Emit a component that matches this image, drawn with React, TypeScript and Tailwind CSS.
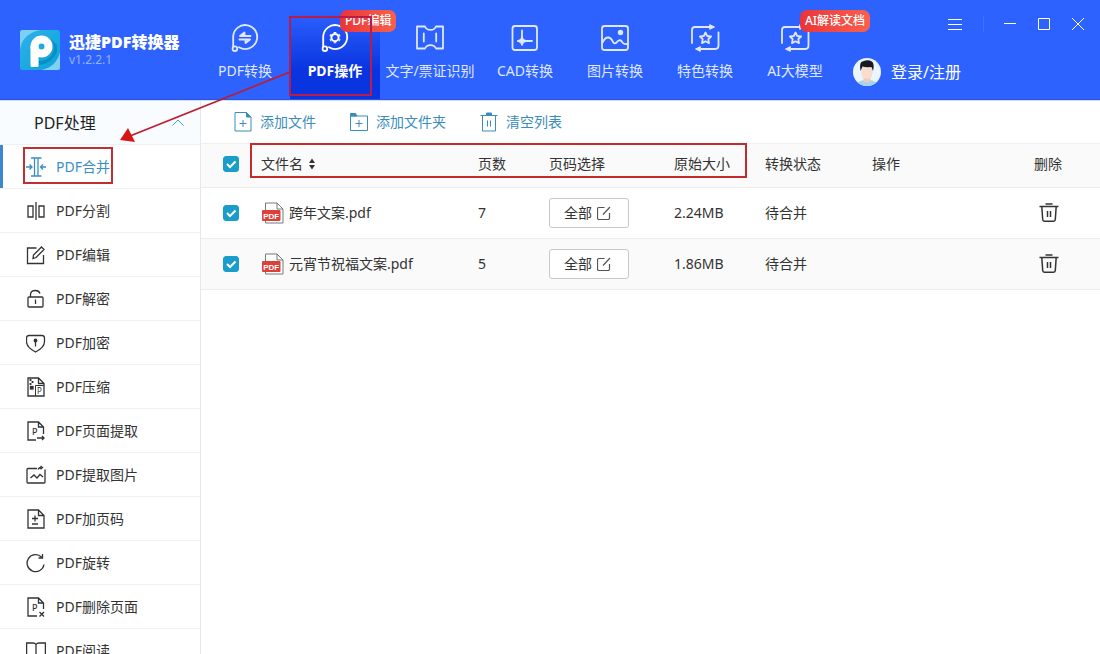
import { useState } from 'react';
import type { ReactNode } from 'react';

interface NavItem {
  label: string;
  icon: ReactNode;
  wide?: boolean;
  active?: boolean;
  badge?: string;
}

interface SideItem {
  label: string;
  icon: ReactNode;
}

interface FileRow {
  name: string;
  pages: number;
  size: string;
  status: string;
}

/* ---------- header icons ---------- */

function NavSvg({ children }: { children: ReactNode }) {
  return (
    <svg
      className="size-8"
      viewBox="0 0 32 32"
      fill="none"
      stroke="currentColor"
      strokeWidth="1.8"
      strokeLinecap="round"
      strokeLinejoin="round"
      aria-hidden="true"
    >
      {children}
    </svg>
  );
}

function Bubble() {
  return (
    <>
      <path d="M4.200 24.500V14.600A12 12 0 1 1 10 25.300" />
      <circle cx="5.900" cy="26.700" r="2.300" />
    </>
  );
}

const ConvertIcon = () => (
  <NavSvg>
    <Bubble />
    <path d="M21.500 14H11L15.500 10.500V13.500M10.500 17.500h10.500L16.500 21V18" strokeWidth="1.8" />
  </NavSvg>
);

const OperateIcon = () => (
  <NavSvg>
    <Bubble />
    <circle cx="16" cy="15.600" r="3.600" strokeWidth="2" />
    <path
      d="M16 11v-1M16 20.200v1M20 13.300l.9-.5M12 17.900l-.9.5M20 17.900l.9.5M12 13.300l-.9-.5"
      strokeWidth="2.600"
      strokeLinecap="butt"
    />
  </NavSvg>
);

const TicketIcon = () => (
  <NavSvg>
    <path d="M3 4.5h8q1.500 3.400 5.500 3.400T22 4.500h7v22h-7q-1.500-3.400-5.500-3.400T11 26.500H3z" />
    <path d="M9.800 11.500v8M22.200 11.500v8" />
  </NavSvg>
);

const CadIcon = () => (
  <NavSvg>
    <rect x="3.500" y="4" width="24.500" height="24" rx="2.500" />
    <path d="M13 8.500V19h10" />
    <path d="M13 14.500l1.500 3 3.500 1.500-3.500 1.500-1.500 3-1.500-3L8 19l3.500-1.500z" fill="currentColor" strokeWidth="1" />
  </NavSvg>
);

const PictureIcon = () => (
  <NavSvg>
    <rect x="3" y="4" width="26" height="24" rx="2.500" />
    <circle cx="21.500" cy="10.500" r="1.800" fill="currentColor" />
    <path d="M3.500 20.500q2.500-5 5.500-5t5 4.500q1.500 2.500 3.500.5 3-3.500 5-1.500 1.500 3.500 5.500 3" />
  </NavSvg>
);

const StarIcon = () => (
  <NavSvg>
    <path d="M3 21V8q0-3 3-3h16M29.500 10.500v13q0 3.500-3 3.500H10" />
    <path d="M21 2.800l4.500 2.200-4.500 2.200zM11 24.800L6.500 27l4.500 2.200z" fill="currentColor" strokeWidth="1" />
    <path d="M16.500 10.500l1.700 3.500 3.900.5-2.800 2.700.7 3.900-3.500-1.800-3.500 1.800.7-3.900-2.800-2.700 3.900-.5z" />
  </NavSvg>
);

/* ---------- sidebar icons ---------- */

function SideSvg({ children }: { children: ReactNode }) {
  return (
    <svg
      className="size-5 shrink-0"
      viewBox="0 0 20 20"
      fill="none"
      stroke="currentColor"
      strokeWidth="1.3"
      aria-hidden="true"
    >
      {children}
    </svg>
  );
}

// page outline with a folded corner, shared by several entries
const PageFold = ({ d = 'M12.500 1H2v18h16V6.500zM12.500 1v5.500H18' }: { d?: string }) => <path d={d} />;

const LetterP = ({ x }: { x: number }) => (
  <text x={x} y="14" fontSize="9" fontFamily="Noto Sans, sans-serif" fontWeight="500" fill="currentColor" stroke="none">
    P
  </text>
);

const sideItems: SideItem[] = [
  {
    label: 'PDF合并',
    icon: (
      <SideSvg>
        <path d="M5 1h3.500v18H5M15.500 1H12v18h3.500M8.500 1H12M8.500 19H12M0 10h6M3.500 7.500L6 10l-2.500 2.500M20 10h-5.500M17 7.500L14.500 10l2.500 2.500" />
      </SideSvg>
    ),
  },
  {
    label: 'PDF分割',
    icon: (
      <SideSvg>
        <path d="M2 5h5v11H2zM13 5h5v11h-5zM10 1v18" />
      </SideSvg>
    ),
  },
  {
    label: 'PDF编辑',
    icon: (
      <SideSvg>
        <path d="M10.500 3H1.500v15.500h16V10M7 13.500l.5-3.500 8-8 2.500 2.500-8 8z" />
      </SideSvg>
    ),
  },
  {
    label: 'PDF解密',
    icon: (
      <SideSvg>
        <path d="M4.500 8V5.500q0-4 5-4 3.500 0 4.500 3M9.500 10.500v4.500" />
        <rect x="2" y="8" width="15" height="10" rx="1" />
      </SideSvg>
    ),
  },
  {
    label: 'PDF加密',
    icon: (
      <SideSvg>
        <path d="M3 2.500h13q2.500 0 2.500 3v3q0 6-9 10.500-9-4.500-9-10.500v-3q0-3 2.500-3z" />
        <path d="M9.500 8.500v5" />
        <circle cx="9.500" cy="7.500" r="1.300" fill="currentColor" />
      </SideSvg>
    ),
  },
  {
    label: 'PDF压缩',
    icon: (
      <SideSvg>
        <PageFold />
        <path d="M4.500 2v2M6.500 4v2M4.500 6v2" strokeWidth="1.800" />
        <rect x="4.500" y="9.500" width="2.500" height="2.500" fill="currentColor" />
        <path d="M9.500 19V8.500h8.500" strokeWidth="1" />
        <text x="11" y="17" fontSize="8" fontFamily="Noto Sans, sans-serif" fill="currentColor" stroke="none">
          P
        </text>
      </SideSvg>
    ),
  },
  {
    label: 'PDF页面提取',
    icon: (
      <SideSvg>
        <PageFold d="M10 19H2V1h10.500L17.500 6v7M12.500 1v5h5M11 17h7M16 15l2 2-2 2" />
        <LetterP x={6} />
      </SideSvg>
    ),
  },
  {
    label: 'PDF提取图片',
    icon: (
      <SideSvg>
        <path d="M11 3.500H2q-1 0-1 1v12.500q0 1 1 1h16q1 0 1-1V4.500M4.500 13l3.500-3 3 3 3-3.500 3 2.500M12 4.500q1-2 3-2M14.500 1l2 1.500-2 1.700" />
      </SideSvg>
    ),
  },
  {
    label: 'PDF加页码',
    icon: (
      <SideSvg>
        <PageFold />
        <path d="M6 9.500h6M9 6.500v6M6 15h6" />
      </SideSvg>
    ),
  },
  {
    label: 'PDF旋转',
    icon: (
      <SideSvg>
        <path d="M18 11.500A8.500 8.500 0 1 1 15.500 4M16.500 1v4h-4" />
      </SideSvg>
    ),
  },
  {
    label: 'PDF删除页面',
    icon: (
      <SideSvg>
        <PageFold d="M11 19H2V1h10.500L17.500 6v6M12.500 1v5h5M13.500 15l4.500 4.500M18 15l-4.500 4.500" />
        <LetterP x={6} />
      </SideSvg>
    ),
  },
  {
    label: 'PDF阅读',
    icon: (
      <SideSvg>
        <path d="M10 3.500Q9 2 7 2H.6v15H7.500q1.500 0 2.500 1.500 1-1.500 2.500-1.500h6.900V2H13q-2 0-3 1.500zM10 3.500v15" />
      </SideSvg>
    ),
  },
];

const navItems: NavItem[] = [
  { label: 'PDF转换', icon: <ConvertIcon /> },
  { label: 'PDF操作', icon: <OperateIcon />, active: true, badge: 'PDF编辑' },
  { label: '文字/票证识别', icon: <TicketIcon />, wide: true },
  { label: 'CAD转换', icon: <CadIcon /> },
  { label: '图片转换', icon: <PictureIcon /> },
  { label: '特色转换', icon: <StarIcon /> },
  { label: 'AI大模型', icon: <StarIcon />, badge: 'AI解读文档' },
];

const files: FileRow[] = [
  { name: '跨年文案.pdf', pages: 7, size: '2.24MB', status: '待合并' },
  { name: '元宵节祝福文案.pdf', pages: 5, size: '1.86MB', status: '待合并' },
];

/* ---------- small pieces ---------- */

function Logo() {
  return (
    <svg className="size-10 shrink-0" viewBox="0 0 40 40" fill="none" aria-hidden="true">
      <defs>
        <linearGradient id="logo-bg" x1="0" y1="0" x2="1" y2="1">
          <stop offset="0" stopColor="#2fb0ea" />
          <stop offset="1" stopColor="#0ba3da" />
        </linearGradient>
      </defs>
      <rect width="40" height="40" rx="2.500" fill="url(#logo-bg)" />
      <path d="M0 20Q2 4 20 0H2.500Q0 0 0 2.500z" fill="#7bd0f3" />
      <path d="M40 22Q37 36 22 40h15.500q2.500 0 2.500-2.500z" fill="#7fd3ee" />
      <path d="M31 9q6 9 0 17-5 5-12 5v4q13-1 18-13V15z" fill="#0a8fc4" />
      <circle cx="21.500" cy="16.500" r="7" stroke="#fff" strokeWidth="8" />
      <rect x="10.500" y="15" width="8" height="22" rx="1.500" fill="#fff" />
    </svg>
  );
}

function Avatar() {
  return (
    <svg className="size-7 shrink-0" viewBox="0 0 28 28" aria-hidden="true">
      <clipPath id="avatar-clip">
        <circle cx="14" cy="14" r="14" />
      </clipPath>
      <g clipPath="url(#avatar-clip)">
        <rect width="28" height="28" fill="#eaf5fd" />
        <path d="M3 28q1-5 8-6h6q7 1 8 6z" fill="#a3d6ee" />
        <path d="M10.500 17h7v6q-3.500 3-7 0z" fill="#f0c9b8" />
        <path d="M8.500 9h11v7q-1 5-5.500 5t-5.500-5z" fill="#f8dccd" />
        <path d="M7.500 13Q6 4 9.500 3.500q7-2.500 10 .5 2 3 .5 9l-1.500-4q-6 .5-9-.500z" fill="#151a22" />
      </g>
    </svg>
  );
}

function PdfFileIcon() {
  return (
    <svg className="h-[22px] w-[23px] shrink-0" viewBox="0 0 23 22" fill="none" aria-hidden="true">
      <path d="M4.500 1h11.500l6 6v14H4.500zM16 1v6h6" fill="#fff" stroke="#707a80" />
      <rect x="1" y="8" width="18.500" height="11" rx="1" fill="#dd4038" />
      <text x="10.250" y="16.500" textAnchor="middle" fontSize="8" fontWeight="700" fontFamily="Liberation Sans, sans-serif" fill="#fff">
        PDF
      </text>
    </svg>
  );
}

function Trash() {
  return (
    <svg className="size-5" viewBox="0 0 20 20" fill="none" stroke="#333" strokeWidth="1.500" aria-hidden="true">
      <path d="M.5 3.500h19M6.500 1h7M2.800 3.500l.9 13q.1 1.700 1.700 1.700h9.200q1.600 0 1.700-1.700l.9-13M8.500 8v6M11.500 8v6" />
    </svg>
  );
}

function CheckBox({ label, checked, onChange }: { label: string; checked: boolean; onChange: () => void }) {
  return (
    <label className="grid size-4 cursor-pointer place-items-center">
      <input
        type="checkbox"
        aria-label={label}
        checked={checked}
        onChange={onChange}
        className="col-start-1 row-start-1 size-4 appearance-none rounded-[3px] border border-[#1a9dcb] bg-white checked:bg-[#1a9dcb]"
      />
      <svg className="pointer-events-none col-start-1 row-start-1 size-4" viewBox="0 0 16 16" fill="none" stroke="#fff" strokeWidth="2" aria-hidden="true">
        <path d="M4 8l3 3 5.500-5.500" />
      </svg>
    </label>
  );
}

function WindowControls() {
  return (
    <div className="flex h-12 items-center self-end pr-4">
      <button type="button" aria-label="菜单">
        <svg className="size-4" viewBox="0 0 16 16" stroke="currentColor" aria-hidden="true">
          <path d="M1 3.500h14M1 8.500h14M1 13.500h14" />
        </svg>
      </button>
      <span className="mx-5 h-4 w-px bg-[#3f70ff]" />
      <div className="flex gap-[22px]">
        <button type="button" aria-label="最小化">
          <svg className="size-3" viewBox="0 0 12 12" stroke="currentColor" aria-hidden="true">
            <path d="M0 5.500h12" />
          </svg>
        </button>
        <button type="button" aria-label="最大化">
          <svg className="size-3" viewBox="0 0 12 12" fill="none" stroke="currentColor" aria-hidden="true">
            <path d="M.5.5h11v11H.5z" />
          </svg>
        </button>
        <button type="button" aria-label="关闭">
          <svg className="size-3" viewBox="0 0 12 12" stroke="currentColor" aria-hidden="true">
            <path d="M0 0l12 12M12 0L0 12" />
          </svg>
        </button>
      </div>
    </div>
  );
}

function Header() {
  return (
    <header className="flex h-[100px] shrink-0 border-b border-[#2c52dc] bg-[#2e62ff] text-white">
      <div className="flex w-[200px] shrink-0 items-center gap-[9px] pl-5">
        <Logo />
        <div>
          <h1 className="text-base leading-5 font-black whitespace-nowrap">迅捷PDF转换器</h1>
          <p className="text-xs leading-4 text-[#93b2ff]">v1.2.2.1</p>
        </div>
      </div>

      <nav className="flex shrink-0">
        {navItems.map((item) => (
          <button
            key={item.label}
            type="button"
            className={`relative flex shrink-0 flex-col items-center pt-[22px] text-sm whitespace-nowrap ${item.wide ? 'w-[100px]' : 'w-[90px]'} ${
              item.active ? 'bg-linear-to-b from-[#2e62ff] from-10% to-[#0a34e0] to-70% font-bold text-white' : 'text-[#dfe8ff]'
            }`}
          >
            {item.icon}
            <span className="mt-[7px] leading-5">{item.label}</span>
            {item.badge && (
              <span className="absolute top-[10px] left-[50px] z-10 rounded-[7px] bg-linear-to-r from-[#e8343a] to-[#f9604c] px-[5px] text-xs leading-[22px] font-medium text-white">
                {item.badge}
              </span>
            )}
            {item.active && <span className="absolute top-4 -left-px z-20 h-20 w-[83px] border-2 border-[#b81d48]" />}
          </button>
        ))}
      </nav>

      <div className="flex grow flex-col">
        <WindowControls />
        <a href="#login" className="flex h-12 items-center gap-[10px] self-start pl-[13px] text-base whitespace-nowrap">
          <Avatar />
          登录/注册
        </a>
      </div>
    </header>
  );
}

function Sidebar() {
  return (
    <aside className="w-[201px] shrink-0 border-r border-[#e6e9ec]">
      <button type="button" className="flex h-11 w-full items-center justify-between border-b border-[#edf1f4] bg-[#f8fcff] pr-4 pl-[34px] text-base text-[#222]">
        PDF处理
        <svg className="size-3" viewBox="0 0 12 12" fill="none" stroke="#4a9fc4" aria-hidden="true">
          <path d="M.5 8.500l5.500-5.500 5.500 5.500" />
        </svg>
      </button>
      <ul>
        {sideItems.map((item, i) => (
          <li key={item.label} className="relative border-b border-[#f0f0f0]">
            <a
              href={`#${item.label}`}
              className={`flex h-[43px] items-center gap-[10px] text-sm ${
                i === 0 ? 'border-l-3 border-[#3b88d0] pl-[23px] text-[#3a8fc0]' : 'pl-[26px] text-[#333]'
              }`}
            >
              {item.icon}
              {item.label}
            </a>
            {i === 0 && <span className="absolute top-[2px] left-[23px] h-[37px] w-[90px] border-2 border-[#c22f33]" />}
          </li>
        ))}
      </ul>
    </aside>
  );
}

function Toolbar() {
  return (
    <div className="flex h-[43px] items-center gap-[34px] border-b border-[#f0f0f0] pl-[33px] text-sm text-[#3a8db8]">
      <button type="button" className="flex items-center gap-2">
        <svg className="h-5 w-[18px]" viewBox="0 0 18 20" fill="none" stroke="currentColor" aria-hidden="true">
          <path d="M12.500.5H1v18.500h16V5zM5.500 11.500h7M9 8v7" />
          <path d="M12.500.5V5H17z" fill="currentColor" />
        </svg>
        添加文件
      </button>
      <button type="button" className="flex items-center gap-2">
        <svg className="h-5 w-[18px]" viewBox="0 0 18 20" fill="none" stroke="currentColor" aria-hidden="true">
          <path d="M.5 4h17v14.500H.5zM5.500 11.500h7M9 8v7" />
          <path d="M.5 1.500h5L7 4H.5z" fill="currentColor" />
        </svg>
        添加文件夹
      </button>
      <button type="button" className="flex items-center gap-2">
        <svg className="h-5 w-[18px]" viewBox="0 0 18 20" fill="none" stroke="currentColor" aria-hidden="true">
          <path d="M.5 3.500h17M2.500 3.500v15.500h13V3.500M7.500 8.500v6M10.500 8.500v6" />
          <path d="M6.500 1h5v2.500h-5z" fill="currentColor" />
        </svg>
        清空列表
      </button>
    </div>
  );
}

function FileTable() {
  const [selected, setSelected] = useState<boolean[]>(files.map(() => true));
  const allSelected = selected.every(Boolean);

  return (
    <div className="relative">
      <table className="w-full table-fixed border-separate border-spacing-0 text-left text-sm text-[#333]">
        <colgroup>
          <col className="w-[60px]" />
          <col />
          <col className="w-[71px]" />
          <col className="w-[125px]" />
          <col className="w-[91px]" />
          <col className="w-[107px]" />
          <col className="w-[162px]" />
          <col className="w-[66px]" />
        </colgroup>
        <thead>
          <tr className="h-11 bg-[#fafafa] *:border-b *:border-[#ececec] *:pb-[3px] *:font-normal">
            <th className="pl-[22px]">
              <CheckBox label="全选" checked={allSelected} onChange={() => setSelected(files.map(() => !allSelected))} />
            </th>
            <th>
              <button type="button" className="flex items-center gap-[6px]">
                文件名
                <svg className="h-3 w-[6px]" viewBox="0 0 6 12" fill="#333" aria-hidden="true">
                  <path d="M3 .5l3 4.500H0zM3 11.500L6 7H0z" />
                </svg>
              </button>
            </th>
            <th>页数</th>
            <th>页码选择</th>
            <th>原始大小</th>
            <th>转换状态</th>
            <th>操作</th>
            <th>删除</th>
          </tr>
        </thead>
        <tbody>
          {files.map((file, i) => (
            <tr key={file.name} className="h-[51px] *:border-b *:border-[#ececec] even:bg-[#fafafa]">
              <td className="pl-[22px]">
                <CheckBox
                  label={file.name}
                  checked={selected[i]}
                  onChange={() => setSelected(selected.map((s, n) => (n === i ? !s : s)))}
                />
              </td>
              <td>
                <div className="flex items-center gap-[5px] whitespace-nowrap">
                  <PdfFileIcon />
                  {file.name}
                </div>
              </td>
              <td>{file.pages}</td>
              <td>
                <button type="button" className="flex h-[30px] w-20 items-center gap-[5px] rounded-[3px] border border-[#c8c8c8] bg-white pl-[14px]">
                  全部
                  <svg className="size-[14px]" viewBox="0 0 14 14" fill="none" stroke="#555" strokeWidth="1.200" aria-hidden="true">
                    <path d="M7.500 1.500H2q-1.500 0-1.500 1.500v9q0 1.500 1.500 1.500h9q1.500 0 1.500-1.500V7M6 8.500L13 1" />
                  </svg>
                </button>
              </td>
              <td>{file.size}</td>
              <td>{file.status}</td>
              <td />
              <td>
                <button type="button" aria-label={`删除 ${file.name}`} className="ml-[5px] block">
                  <Trash />
                </button>
              </td>
            </tr>
          ))}
        </tbody>
      </table>
      <span className="pointer-events-none absolute -top-px right-[353px] left-[49px] h-[35px] border-2 border-[#c42b2d]" />
    </div>
  );
}

export default function App() {
  return (
    <div className="relative flex h-screen flex-col overflow-hidden bg-white font-['Noto_Sans','Noto_Sans_CJK_SC',sans-serif]">
      <Header />
      <div className="flex min-h-0 grow border-t border-[#cfe0ff]">
        <Sidebar />
        <main className="min-w-0 grow">
          <Toolbar />
          <FileTable />
        </main>
      </div>
      {/* pointer from the active tab to the active sidebar entry */}
      <svg className="pointer-events-none absolute top-[70px] left-[118px] z-30 h-[76px] w-[174px]" viewBox="0 0 174 76" aria-hidden="true">
        <path d="M172 2L12 66" stroke="#c01a2c" strokeWidth="1.800" />
        <path d="M2 70l8-12 7 14z" fill="#d81616" />
      </svg>
    </div>
  );
}
